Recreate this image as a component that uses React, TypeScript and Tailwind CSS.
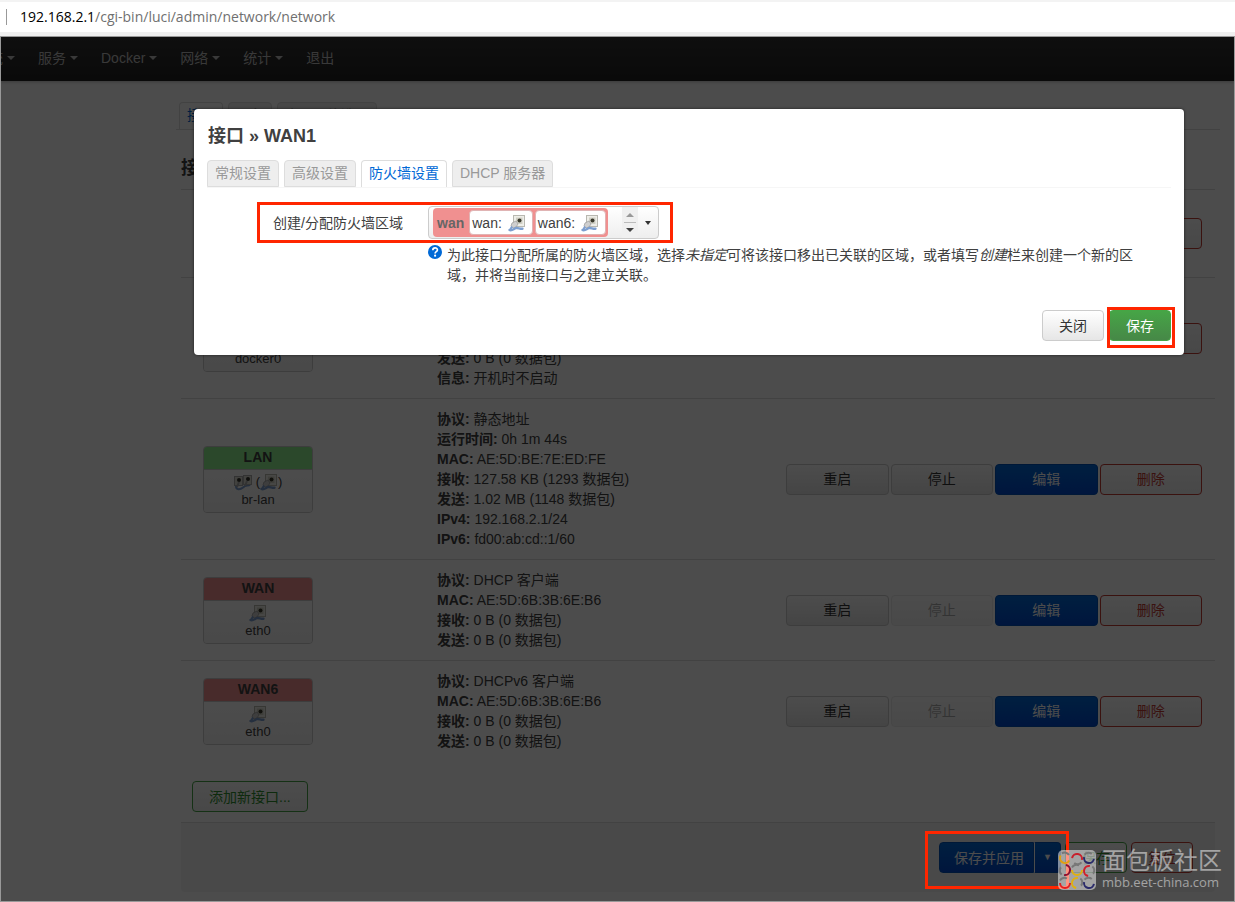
import type { ReactNode } from "react";

type Row = {
  name: string;
  device: string;
  color: string;
  bridge?: boolean;
  canStop: boolean;
  info: [string, string][];
};

const rows: Row[] = [
  {
    name: "DOCKER",
    device: "docker0",
    color: "bg-[#eeeeee]",
    canStop: true,
    info: [
      ["协议", "不配置协议"],
      ["MAC", "02:42:7E:1C:5A:90"],
      ["接收", "0 B (0 数据包)"],
      ["发送", "0 B (0 数据包)"],
      ["信息", "开机时不启动"],
    ],
  },
  {
    name: "LAN",
    device: "br-lan",
    color: "bg-[#90f090]",
    bridge: true,
    canStop: true,
    info: [
      ["协议", "静态地址"],
      ["运行时间", "0h 1m 44s"],
      ["MAC", "AE:5D:BE:7E:ED:FE"],
      ["接收", "127.58 KB (1293 数据包)"],
      ["发送", "1.02 MB (1148 数据包)"],
      ["IPv4", "192.168.2.1/24"],
      ["IPv6", "fd00:ab:cd::1/60"],
    ],
  },
  {
    name: "WAN",
    device: "eth0",
    color: "bg-[#f09090]",
    canStop: false,
    info: [
      ["协议", "DHCP 客户端"],
      ["MAC", "AE:5D:6B:3B:6E:B6"],
      ["接收", "0 B (0 数据包)"],
      ["发送", "0 B (0 数据包)"],
    ],
  },
  {
    name: "WAN6",
    device: "eth0",
    color: "bg-[#f09090]",
    canStop: false,
    info: [
      ["协议", "DHCPv6 客户端"],
      ["MAC", "AE:5D:6B:3B:6E:B6"],
      ["接收", "0 B (0 数据包)"],
      ["发送", "0 B (0 数据包)"],
    ],
  },
];

function PortIcon() {
  return (
    <svg width="18" height="18" viewBox="0 0 18 18" className="inline-block shrink-0" aria-hidden="true">
      <rect x="5.5" y="1.5" width="11" height="11" fill="#eeeee8" stroke="#b8b8b0" />
      <rect x="8" y="3.5" width="6.500" height="6.500" fill="#cfcfc4" />
      <circle cx="11.5" cy="6.500" r="2" fill="#3a3a2c" />
      <path d="M3 12l1-3 4-2 2 3-2 3-3 1z" fill="#cfcfcf" stroke="#a0a0a0" strokeWidth=".8" />
      <path d="M1.500 16c2 1 4-.8 6-1.800 2-.8 4 .8 7 .6" fill="none" stroke="#7d9fd0" strokeWidth="2.400" strokeLinecap="round" />
      <path d="M4 12.500l-2 3.500" stroke="#7d9fd0" strokeWidth="2" />
    </svg>
  );
}

function BridgeIcon() {
  return (
    <svg width="18" height="18" viewBox="0 0 18 18" className="inline-block shrink-0" aria-hidden="true">
      <path d="M2 13c0 4 4 4 7 1.500 3-3 5-1 7-3" fill="none" stroke="#7d9fd0" strokeWidth="2" />
      <rect x=".5" y="3.500" width="8" height="9" fill="#dcdcd4" stroke="#aaa" />
      <rect x="9.500" y="2.500" width="8" height="9" fill="#dcdcd4" stroke="#aaa" />
      <circle cx="5" cy="7" r="2" fill="#35352c" />
      <circle cx="14" cy="6" r="2" fill="#35352c" />
      <path d="M3 14l2-5M11 13l2-5" stroke="#aaa" strokeWidth="2" />
    </svg>
  );
}

function Caret() {
  return <span className="border-x-4 border-t-4 border-x-transparent border-t-[#bfbfbf]" />;
}

function NavItem({ children, menu = true }: { children: ReactNode; menu?: boolean }) {
  return (
    <a href="#" className="flex shrink-0 items-center gap-1 whitespace-nowrap text-[#bfbfbf]">
      {children}
      {menu && <Caret />}
    </a>
  );
}

function Tab({ children, active = false }: { children: ReactNode; active?: boolean }) {
  return (
    <button
      role="tab"
      aria-selected={active}
      className={
        active
          ? "h-[27px] rounded-t border border-b-0 border-[#ddd] bg-white px-[7px] pb-0.5 leading-5 text-[#0069d6]"
          : "h-[27px] rounded-t border border-[#ddd] bg-[#eee] px-[7px] pb-0.5 leading-5 text-[#999]"
      }
    >
      {children}
    </button>
  );
}

const buttonStyles = {
  plain: "border-[#ccc] bg-linear-to-b from-white to-[#e6e6e6] text-[#333]",
  primary: "border-[#0050b8] bg-linear-to-b from-[#0069d6] to-[#0048cc] text-white",
  danger: "border-[#c43c35] bg-linear-to-b from-white to-[#f0f0f0] text-[#c43c35]",
  success: "border-[#46a546] bg-linear-to-b from-white to-[#f0f0f0] text-[#2f8f2f]",
  solid: "border-[#46a546] bg-linear-to-b from-[#46a546] to-[#468847] text-white",
};

function Button({
  children,
  kind = "plain",
  disabled = false,
}: {
  children: ReactNode;
  kind?: keyof typeof buttonStyles;
  disabled?: boolean;
}) {
  return (
    <button
      disabled={disabled}
      className={`h-[31px] rounded border px-4 leading-5 whitespace-nowrap disabled:opacity-40 ${buttonStyles[kind]}`}
    >
      {children}
    </button>
  );
}

function RowActions({ canStop = true }: { canStop?: boolean }) {
  return (
    <div className="grid grid-cols-4 gap-0.5">
      <Button>重启</Button>
      <Button disabled={!canStop}>停止</Button>
      <Button kind="primary">编辑</Button>
      <Button kind="danger">删除</Button>
    </div>
  );
}

function InterfaceRow({ row }: { row: Row }) {
  return (
    <tr className="border-t border-[#ddd]">
      <td className="py-2.5 pl-[22px]">
        <div className="w-[110px] overflow-hidden rounded border border-[#ccc] text-center text-[13px]">
          <div className={`h-[23px] border-b border-[#ccc] text-sm leading-[21px] font-bold ${row.color}`}>{row.name}</div>
          <div className="h-[42px] bg-linear-to-b from-white to-[#f4f4f4] pt-1">
            <div className="flex h-[17px] items-center justify-center">
              {row.bridge && (
                <>
                  <BridgeIcon />
                  <span className="pl-1">(</span>
                </>
              )}
              <PortIcon />
              {row.bridge && <span>)</span>}
            </div>
            <div className="leading-[18px]">{row.device}</div>
          </div>
        </div>
      </td>
      <td className="py-2.5">
        {row.info.map(([label, value]) => (
          <div key={label} className="leading-5">
            <strong>{label}:</strong> {value}
          </div>
        ))}
      </td>
      <td className="py-2.5 pr-[13px]">
        <RowActions canStop={row.canStop} />
      </td>
    </tr>
  );
}

function Page() {
  return (
    <>
      <nav className="flex h-11 items-center bg-linear-to-b from-[#333] to-[#222] pb-0.5 shadow-[0_1px_3px_rgba(0,0,0,0.25)]">
        <div className="-ml-[26px] flex gap-[23px]">
          <NavItem>系统</NavItem>
          <NavItem>服务</NavItem>
          <NavItem>Docker</NavItem>
          <NavItem>网络</NavItem>
          <NavItem>统计</NavItem>
          <NavItem menu={false}>退出</NavItem>
        </div>
      </nav>
      <main className="pt-[21px] pr-[19px] pb-2 pl-[180px]">
        <div role="tablist" className="-mx-[5px] flex gap-[5px] border-b border-[#ddd] pl-[3px]">
          <Tab active>接口</Tab>
          <Tab>设备</Tab>
          <Tab>全局网络选项</Tab>
        </div>
        <h2 className="mt-[25px] mb-2 text-lg leading-[26px] font-bold">接口</h2>
        <table className="w-full table-fixed">
          <colgroup>
            <col className="w-[256px]" />
            <col />
            <col className="w-[429px]" />
          </colgroup>
          <tbody>
            <tr className="h-[88px] border-t border-[#ddd]">
              <td />
              <td />
              <td className="pr-[13px]">
                <RowActions />
              </td>
            </tr>
            {rows.map((row) => (
              <InterfaceRow key={row.name} row={row} />
            ))}
          </tbody>
        </table>
        <div className="mt-5 mb-2.5 pl-[11px]">
          <Button kind="success">添加新接口...</Button>
        </div>
        <div className="flex justify-end gap-1 rounded-b border-t border-[#ddd] bg-[#f5f5f5] py-[19px] pr-[22px]">
          <div className="relative flex">
            <button className={`h-[31px] rounded-l border pr-[9px] pl-3.5 leading-5 ${buttonStyles.primary}`}>
              保存并应用
            </button>
            <button
              aria-label="更多"
              className="h-[31px] w-[27px] rounded-r border border-l-white border-[#0050b8] bg-linear-to-b from-[#0069d6] to-[#0048cc] text-[9px] text-white"
            >
              ▼
            </button>
            <span className="pointer-events-none absolute -top-[11px] -right-2 -bottom-4 -left-3.5 z-20 border-[3px] border-[#ff2600]" />
          </div>
          <Button kind="success">保存</Button>
          <Button kind="danger">复位</Button>
        </div>
      </main>
    </>
  );
}

function ZoneMember({ children }: { children: ReactNode }) {
  return (
    <span className="flex h-[25px] items-center gap-1.5 rounded border border-[#e0b4b4] bg-white pr-1.5 pl-0.5 text-[#404040]">
      {children}
      <PortIcon />
    </span>
  );
}

function Dialog() {
  return (
    <section
      role="dialog"
      aria-labelledby="dialog-title"
      className="rounded bg-white px-[13px] py-3.5 shadow-[0_0_3px_rgba(0,0,0,0.6)]"
    >
      <h4 id="dialog-title" className="pl-px text-lg leading-[26px] font-bold">
        接口 » WAN1
      </h4>
      <div role="tablist" className="mt-[11px] flex gap-[5px] border-b border-[#f6f6f6]">
        <Tab>常规设置</Tab>
        <Tab>高级设置</Tab>
        <Tab active>防火墙设置</Tab>
        <Tab>DHCP 服务器</Tab>
      </div>
      <div className="mt-3.5 ml-[50px] flex h-[41px] w-fit items-center border-[3px] border-[#ff2600] pr-[11px] pl-[13px]">
        <span id="zone-label" className="w-[155px]">
          创建/分配防火墙区域
        </span>
        <button
          role="combobox"
          aria-labelledby="zone-label"
          aria-expanded="false"
          className="flex h-[33px] w-[231px] items-center rounded border border-[#ccc] bg-linear-to-b from-white to-[#eee] pl-1"
        >
          <span className="flex h-[29px] items-center gap-0.5 rounded bg-[#f09090] pr-0.5 pl-1">
            <strong className="mr-[3px] text-[#666]">wan</strong>
            <ZoneMember>wan:</ZoneMember>
            <ZoneMember>wan6:</ZoneMember>
          </span>
          <span className="mr-[7px] ml-auto flex h-[31px] w-4 flex-col items-center justify-center gap-[5px] bg-[#f0f0f0]">
            <span className="border-x-4 border-b-4 border-x-transparent border-b-[#999]" />
            <span className="h-px w-3 bg-[#bbb]" />
            <span className="border-x-4 border-t-4 border-x-transparent border-t-[#404040]" />
          </span>
          <span className="mr-[7px] border-x-[3px] border-t-4 border-x-transparent border-t-[#333]" />
        </button>
      </div>
      <div className="mt-0.5 mr-7 ml-[221px] flex gap-[5px]">
        <svg width="14" height="14" viewBox="0 0 14 14" className="shrink-0" aria-hidden="true">
          <circle cx="7" cy="7" r="7" fill="#0069d6" />
          <path d="M4.800 5.200c0-3 4.600-3 4.600-.3C9.400 6.700 7.100 6.500 7.100 8.500" fill="none" stroke="#fff" strokeWidth="1.700" />
          <circle cx="7.100" cy="10.700" r="1.100" fill="#fff" />
        </svg>
        <p className="leading-5">
          为此接口分配所属的防火墙区域，选择<em>未指定</em>可将该接口移出已关联的区域，或者填写<em>创建</em>栏来创建一个新的区域，并将当前接口与之建立关联。
        </p>
      </div>
      <div className="mt-[25px] flex justify-end gap-[5px]">
        <Button>关闭</Button>
        <div className="relative flex">
          <Button kind="solid">保存</Button>
          <span className="pointer-events-none absolute -top-[3px] -right-1 -bottom-[7px] -left-0.5 border-[3px] border-[#ff2600]" />
        </div>
      </div>
    </section>
  );
}

const logoArcs = [
  { x: 7, y: 8, turn: 30, color: "#e0a010" },
  { x: 19, y: 9, turn: 190, color: "#c8202c" },
  { x: 31, y: 8, turn: 10, color: "#2a2a6a" },
  { x: 7, y: 20, turn: -80, color: "#8c1030" },
  { x: 19, y: 20, turn: 0, color: "#e0b010" },
  { x: 31, y: 21, turn: 100, color: "#d0202c" },
  { x: 7, y: 33, turn: 0, color: "#e02020" },
  { x: 19, y: 33, turn: 100, color: "#e0b010" },
  { x: 31, y: 33, turn: 10, color: "#2a2a6a" },
];

function Watermark() {
  return (
    <div className="pointer-events-none absolute right-3 bottom-2.5 z-30 flex items-center gap-1.5 text-white/50">
      <svg width="38" height="40" viewBox="0 0 38 40" aria-hidden="true">
        <rect width="38" height="40" rx="5" fill="#fff" fillOpacity=".5" />
        {logoArcs.map(({ x, y, turn, color }) => (
          <g key={`${x}-${y}`} transform={`translate(${x} ${y}) rotate(${turn})`} fill="none" strokeWidth="2">
            <path d="M-5 0a5 5 0 0 0 10 0" stroke={color} />
            <path d="M-5-2.500a5 5 0 0 1 7-2" stroke="#777" />
          </g>
        ))}
      </svg>
      <div>
        <div className="text-2xl leading-6">面包板社区</div>
        <div className="font-['Open_Sans',sans-serif] text-[13px] leading-[18px]">mbb.eet-china.com</div>
      </div>
    </div>
  );
}

export default function App() {
  return (
    <div className="flex min-h-screen flex-col bg-white font-['Liberation_Sans','Noto_Sans_CJK_SC',sans-serif] text-sm text-[#404040]">
      <header className="flex h-9 items-center border-t-2 border-b-4 border-t-[#f3f3f3] border-b-[#efefef] pl-1.5">
        <span className="h-4 w-px bg-[#999]" />
        <span className="pl-[13px] font-['Open_Sans',sans-serif] text-[#707070]">
          <span className="text-black">192.168.2.1</span>/cgi-bin/luci/admin/network/network
        </span>
      </header>
      <div className="relative flex-1 overflow-hidden border border-[#999]">
        <Page />
        <div className="absolute inset-0 z-10 bg-black/70 pt-[72px] pr-[50px] pl-[193px]">
          <Dialog />
        </div>
        <Watermark />
      </div>
    </div>
  );
}
